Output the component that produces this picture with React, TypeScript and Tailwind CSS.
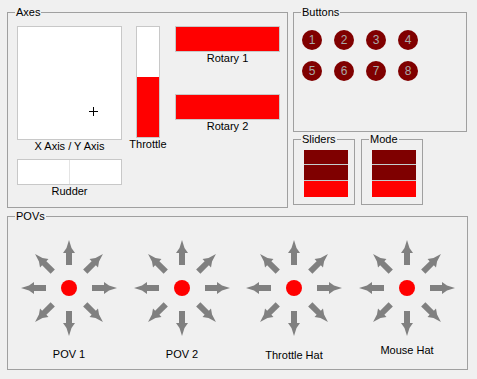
import React from 'react';

interface GroupBoxProps {
  title: string;
  className: string;
  children?: React.ReactNode;
}

function GroupBox({ title, className, children }: GroupBoxProps) {
  return (
    <div className={'relative border border-[#a0a0a0] ' + className}>
      <span className="absolute -top-[7px] left-[7px] bg-[#f0f0f0] px-[1px] leading-[13px] whitespace-nowrap">
        {title}
      </span>
      {children}
    </div>
  );
}

const ARROW = '0,-48 2.5,-40 6,-35 3,-35 3,-23 -3,-23 -3,-35 -6,-35 -2.5,-40';

function Pov({ label, className }: { label: string; className: string }) {
  return (
    <div className={'flex flex-col items-center w-[100px] ' + className}>
      <svg width="100" height="100" viewBox="-50 -50 100 100">
        {[0, 45, 90, 135, 180, 225, 270, 315].map((deg) => (
          <polygon key={deg} points={ARROW} fill="#808080" transform={`rotate(${deg})`} />
        ))}
        <circle cx="0" cy="0" r="8" fill="#ff0000" />
      </svg>
      <span className="whitespace-nowrap">{label}</span>
    </div>
  );
}

function SegBar() {
  return (
    <div className="w-[44px] flex flex-col">
      <div className="h-[14px] bg-[#7f0000]" />
      <div className="h-px bg-[#c4cccc]" />
      <div className="h-[15px] bg-[#7f0000]" />
      <div className="h-px bg-[#c4cccc]" />
      <div className="h-[16px] bg-[#ff0000]" />
    </div>
  );
}

export default function App() {
  return (
    <div className="w-[477px] h-[379px] bg-[#f0f0f0] pt-[12px] pl-[7px] font-['Liberation_Sans',Arial,sans-serif] text-[11px] leading-[13px] text-black overflow-hidden">
      <div className="flex">
        {/* Axes */}
        <GroupBox title="Axes" className="w-[281px] h-[196px] pl-[9px] pt-[13px] flex">
          <div className="flex flex-col w-[105px]">
            <div className="relative h-[114px] border border-[#c8c8c8] bg-white">
              <svg className="absolute left-[71px] top-[80px]" width="9" height="9" viewBox="0 0 9 9">
                <line x1="0" y1="4.5" x2="9" y2="4.5" stroke="#000" strokeWidth="1" />
                <line x1="4.5" y1="0" x2="4.5" y2="9" stroke="#000" strokeWidth="1" />
              </svg>
            </div>
            <span className="text-center">X Axis / Y Axis</span>
            <div className="mt-[6px] h-[26px] border border-[#c8c8c8] bg-white flex">
              <div className="w-[51px]" />
              <div className="w-px bg-[#e4e4e4]" />
              <div className="flex-1" />
            </div>
            <span className="text-center">Rudder</span>
          </div>

          <div className="ml-[14px] w-[24px] flex flex-col items-center">
            <div className="h-[112px] w-[24px] border border-[#c8c8c8] flex flex-col">
              <div className="flex-1 bg-white" />
              <div className="h-[60px] bg-[#ff0000]" />
            </div>
            <span className="whitespace-nowrap">Throttle</span>
          </div>

          <div className="ml-[15px] w-[105px] flex flex-col">
            <div className="h-[26px] border border-[#c8c8c8] bg-[#ff0000]" />
            <span className="text-center">Rotary 1</span>
            <div className="mt-[29px] h-[26px] border border-[#c8c8c8] bg-[#ff0000]" />
            <span className="text-center">Rotary 2</span>
          </div>
        </GroupBox>

        <div className="ml-[5px] w-[174px] flex flex-col">
          {/* Buttons */}
          <GroupBox title="Buttons" className="h-[120px] pl-[8px] pt-[17px]">
            <div className="grid grid-cols-[repeat(4,20px)] gap-x-[12px] gap-y-[11px]">
              {[1, 2, 3, 4, 5, 6, 7, 8].map((n) => (
                <div
                  key={n}
                  className="w-[20px] h-[20px] rounded-full bg-[#800000] text-[#a8a8a8] text-[12px] flex items-center justify-center"
                >
                  {n}
                </div>
              ))}
            </div>
          </GroupBox>

          <div className="mt-[7px] flex gap-[6px]">
            <GroupBox title="Sliders" className="w-[62px] h-[66px] pl-[10px] pt-[10px]">
              <SegBar />
            </GroupBox>
            <GroupBox title="Mode" className="w-[62px] h-[66px] pl-[10px] pt-[10px]">
              <SegBar />
            </GroupBox>
          </div>
        </div>
      </div>

      {/* POVs */}
      <GroupBox title="POVs" className="mt-[8px] w-[461px] h-[154px] pl-[11px] pt-[21px] flex items-start">
        <Pov label="POV 1" className="[&>span]:mt-[10px]" />
        <Pov label="POV 2" className="ml-[13px] [&>span]:mt-[10px]" />
        <Pov label="Throttle Hat" className="ml-[12px] [&>span]:mt-[11px]" />
        <Pov label="Mouse Hat" className="ml-[13px] [&>span]:mt-[6px]" />
      </GroupBox>
    </div>
  );
}
